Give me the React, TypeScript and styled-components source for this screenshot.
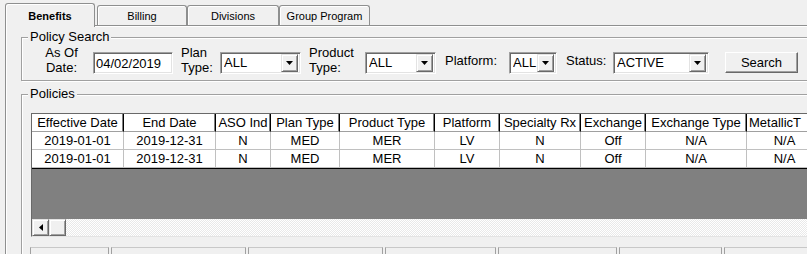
import React from 'react';
import styled, { createGlobalStyle } from 'styled-components';

const GlobalStyle = createGlobalStyle`
    html, body {
        margin: 0;
        padding: 0;
        background: #f0f0f0;
    }
`;

const Window = styled.div`
    width: 807px;
    height: 254px;
    overflow: hidden;
    background: #f0f0f0;
    font-family: "Liberation Sans", Arial, sans-serif;
    font-size: 13px;
    color: #000;
`;

const TabStrip = styled.div`
    position: relative;
    z-index: 1;
    display: flex;
    align-items: flex-end;
    height: 25px;
    padding-left: 5px;
`;

const Tab = styled.div<{ $active?: boolean; $w: number; $ml?: number }>`
    box-sizing: border-box;
    flex: none;
    width: ${(p) => p.$w}px;
    height: ${(p) => (p.$active ? 24 : 20)}px;
    margin-bottom: ${(p) => (p.$active ? -2 : 0)}px;
    margin-left: ${(p) => p.$ml ?? 0}px;
    padding-top: ${(p) => (p.$active ? 6 : 4)}px;
    border: 1px solid #8e8f8f;
    border-bottom: none;
    border-radius: 3px 3px 0 0;
    box-shadow: inset 1px 1px 0 #fff;
    background: #f0f0f0;
    text-align: center;
    font-size: 11px;
    line-height: 13px;
    font-weight: ${(p) => (p.$active ? 700 : 400)};
`;

const Panel = styled.div`
    box-sizing: border-box;
    width: 830px;
    height: 229px;
    margin-left: 5px;
    padding: 4px 0 0 15px;
    border-top: 1px solid #8e8f8f;
    border-left: 1px solid #8e8f8f;
    box-shadow: inset 1px 1px 0 #fff;
`;

const GroupBox = styled.fieldset<{ $mt?: number }>`
    min-width: 0;
    margin: ${(p) => p.$mt ?? 0}px 0 0 0;
    padding: 0 0 0 9px;
    border: 1px solid #a0a0a0;
    box-shadow: inset 1px 1px 0 #fff, 1px 1px 0 #fff;
`;

const Caption = styled.legend`
    margin-left: -3px;
    padding: 0 2px;
    line-height: 14px;
    background: #f0f0f0;
`;

const SearchRow = styled.div`
    display: flex;
    align-items: flex-start;
    padding-bottom: 5px;
`;

const Label = styled.div<{ $w: number; $ml?: number; $mt?: number; $center?: boolean }>`
    flex: none;
    width: ${(p) => p.$w}px;
    margin-left: ${(p) => p.$ml ?? 0}px;
    margin-top: ${(p) => p.$mt ?? 1}px;
    line-height: 15px;
    text-align: ${(p) => (p.$center ? 'center' : 'left')};
    white-space: nowrap;
`;

const sunken = `
    box-sizing: border-box;
    height: 22px;
    background: #fff;
    border: 1px solid;
    border-color: #a0a0a0 #fff #fff #a0a0a0;
    box-shadow: inset 1px 1px 0 #696969, inset -1px -1px 0 #e3e3e3;
`;

const TextBox = styled.input<{ $w: number; $ml?: number }>`
    ${sunken}
    flex: none;
    width: ${(p) => p.$w}px;
    margin: 8px 0 0 ${(p) => p.$ml ?? 0}px;
    padding: 0 2px;
    font: 13px "Liberation Sans", Arial, sans-serif;
    color: #000;
    outline: none;
`;

const Combo = styled.div<{ $w: number }>`
    ${sunken}
    flex: none;
    display: flex;
    align-items: center;
    width: ${(p) => p.$w}px;
    margin-top: 8px;
    padding: 2px 2px 2px 3px;
`;

const ComboText = styled.span`
    flex: 1;
    line-height: 18px;
    white-space: nowrap;
    overflow: hidden;
`;

const raised = `
    box-sizing: border-box;
    background: #f0f0f0;
    border: 1px solid;
    border-color: #e3e3e3 #696969 #696969 #e3e3e3;
    box-shadow: inset 1px 1px 0 #fff, inset -1px -1px 0 #a0a0a0;
`;

const DropButton = styled.div`
    ${raised}
    flex: none;
    display: flex;
    align-items: center;
    justify-content: center;
    width: 17px;
    height: 18px;
`;

const SearchButton = styled.button<{ $ml?: number }>`
    ${raised}
    flex: none;
    width: 73px;
    height: 21px;
    margin: 8px 0 0 ${(p) => p.$ml ?? 0}px;
    padding: 0;
    border-color: #fff #696969 #696969 #fff;
    box-shadow: inset -1px -1px 0 #a0a0a0;
    font: 13px "Liberation Sans", Arial, sans-serif;
    color: #000;
`;

const Grid = styled.div`
    box-sizing: border-box;
    display: flex;
    flex-direction: column;
    height: 124px;
    margin-top: 12px;
    border-top: 1px solid #696969;
    border-left: 1px solid #696969;
    border-bottom: 1px solid #e3e3e3;
    background: #808080;
`;

const GridRows = styled.div`
    border-bottom: 1px solid #000;
`;

const GridRow = styled.div`
    display: flex;
`;

const Cell = styled.div<{ $w: number; $head?: boolean; $left?: boolean }>`
    box-sizing: border-box;
    flex: none;
    width: ${(p) => p.$w}px;
    height: 18px;
    padding-left: ${(p) => (p.$left ? 2 : 0)}px;
    line-height: 17px;
    text-align: ${(p) => (p.$left ? 'left' : 'center')};
    white-space: nowrap;
    overflow: hidden;
    background: #fff;
    border-right: 1px solid ${(p) => (p.$head ? '#000' : '#c0c0c0')};
    border-bottom: 1px solid ${(p) => (p.$head ? '#a0a0a0' : '#c0c0c0')};
    box-shadow: ${(p) => (p.$head ? 'inset -1px 0 0 #808080' : 'none')};
`;

const GridFill = styled.div`
    flex: 1;
`;

const HScroll = styled.div`
    display: flex;
    height: 17px;
    background: repeating-conic-gradient(#fff 0 25%, #e9e9e9 0 50%) 0 0 / 2px 2px;
`;

const ScrollPart = styled.div`
    ${raised}
    flex: none;
    display: flex;
    align-items: center;
    justify-content: center;
    width: 17px;
    height: 17px;
`;

const FooterRow = styled.div`
    display: flex;
    gap: 2px;
    margin: 10px 0 0 -1px;
`;

const FooterBox = styled.div<{ $w: number }>`
    box-sizing: border-box;
    flex: none;
    width: ${(p) => p.$w}px;
    height: 20px;
    border: 1px solid #a0a0a0;
    border-top-color: #c8c8c8;
    background: #f0f0f0;
`;

const DownArrow = () => (
    <svg width="7" height="4" viewBox="0 0 7 4">
        <polygon points="0,0 7,0 3.5,4" fill="#000" />
    </svg>
);

const LeftArrow = () => (
    <svg width="4" height="7" viewBox="0 0 4 7">
        <polygon points="4,0 4,7 0,3.5" fill="#000" />
    </svg>
);

const columns = [
    { title: 'Effective Date', w: 92 },
    { title: 'End Date', w: 92 },
    { title: 'ASO Ind', w: 55 },
    { title: 'Plan Type', w: 69 },
    { title: 'Product Type', w: 95 },
    { title: 'Platform', w: 65 },
    { title: 'Specialty Rx', w: 81 },
    { title: 'Exchange', w: 65 },
    { title: 'Exchange Type', w: 101 },
    { title: 'MetallicT', w: 76, left: true },
];

const rows = [
    ['2019-01-01', '2019-12-31', 'N', 'MED', 'MER', 'LV', 'N', 'Off', 'N/A', 'N/A'],
    ['2019-01-01', '2019-12-31', 'N', 'MED', 'MER', 'LV', 'N', 'Off', 'N/A', 'N/A'],
];

const footerWidths = [79, 135, 135, 111, 119, 103, 120];

const App: React.FC = () => {
    return (
        <Window>
            <GlobalStyle />
            <TabStrip>
                <Tab $active $w={90}>Benefits</Tab>
                <Tab $w={90} $ml={2}>Billing</Tab>
                <Tab $w={92}>Divisions</Tab>
                <Tab $w={91}>Group Program</Tab>
            </TabStrip>
            <Panel>
                <GroupBox>
                    <Caption>Policy Search</Caption>
                    <SearchRow>
                        <Label $w={35} $ml={13} $center>As Of<br />Date:</Label>
                        <TextBox $w={80} $ml={14} defaultValue="04/02/2019" readOnly />
                        <Label $w={39} $ml={8}>Plan<br />Type:</Label>
                        <Combo $w={81}>
                            <ComboText>ALL</ComboText>
                            <DropButton><DownArrow /></DropButton>
                        </Combo>
                        <Label $w={56} $ml={8}>Product<br />Type:</Label>
                        <Combo $w={71}>
                            <ComboText>ALL</ComboText>
                            <DropButton><DownArrow /></DropButton>
                        </Combo>
                        <Label $w={64} $ml={9} $mt={9}>Platform:</Label>
                        <Combo $w={48}>
                            <ComboText>ALL</ComboText>
                            <DropButton><DownArrow /></DropButton>
                        </Combo>
                        <Label $w={47} $ml={9} $mt={9}>Status:</Label>
                        <Combo $w={96}>
                            <ComboText>ACTIVE</ComboText>
                            <DropButton><DownArrow /></DropButton>
                        </Combo>
                        <SearchButton $ml={16}>Search</SearchButton>
                    </SearchRow>
                </GroupBox>
                <GroupBox $mt={6}>
                    <Caption>Policies</Caption>
                    <Grid>
                        <GridRows>
                            <GridRow>
                                {columns.map((c) => (
                                    <Cell key={c.title} $w={c.w} $head $left={c.left}>{c.title}</Cell>
                                ))}
                            </GridRow>
                            {rows.map((r, i) => (
                                <GridRow key={i}>
                                    {r.map((v, j) => (
                                        <Cell key={j} $w={columns[j].w}>{v}</Cell>
                                    ))}
                                </GridRow>
                            ))}
                        </GridRows>
                        <GridFill />
                        <HScroll>
                            <ScrollPart><LeftArrow /></ScrollPart>
                            <ScrollPart />
                        </HScroll>
                    </Grid>
                    <FooterRow>
                        {footerWidths.map((w, i) => (
                            <FooterBox key={i} $w={w} />
                        ))}
                    </FooterRow>
                </GroupBox>
            </Panel>
        </Window>
    );
};

export default App;
